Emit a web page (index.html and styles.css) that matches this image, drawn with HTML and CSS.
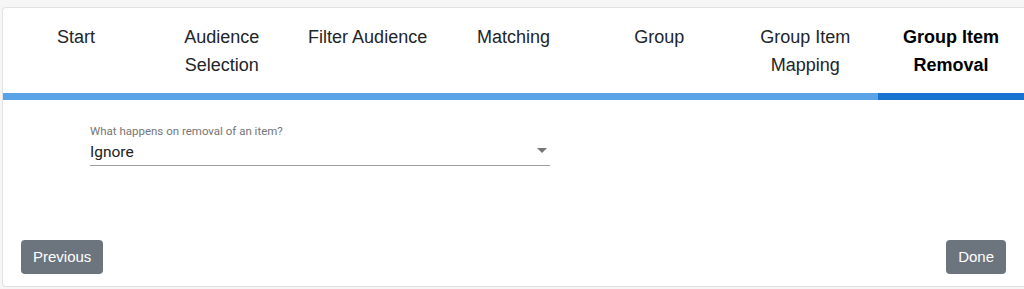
FILE: index.html
```html
<!DOCTYPE html>
<html lang="en">
<head>
  <meta charset="UTF-8">
  <title>Group Wizard</title>
  <link rel="stylesheet" href="styles.css">
</head>
<body>

<div class="wizard">
  <div class="steps">
    <div class="step">Start</div>
    <div class="step">Audience Selection</div>
    <div class="step">Filter Audience</div>
    <div class="step">Matching</div>
    <div class="step">Group</div>
    <div class="step">Group Item Mapping</div>
    <div class="step active">Group Item Removal</div>
  </div>

  <div class="step-body">
    <div class="field">
      <label class="field-label">What happens on removal of an item?</label>
      <div class="select">
        <span class="select-value">Ignore</span>
        <span class="select-arrow"></span>
      </div>
    </div>
  </div>

  <div class="footer">
    <button class="btn">Previous</button>
    <button class="btn">Done</button>
  </div>
</div>

</body>
</html>
```

FILE: styles.css
```css
body {
  margin: 0;
  background: #f6f6f6;
  font-family: 'Liberation Sans', Arial, sans-serif;
  color: #212529;
}

.wizard {
  margin: 7px 0 0 2px;
  background: #fff;
  border: 1px solid #e2e2e2;
  border-right: none;
  border-radius: 4px 0 0 4px;
}

.steps {
  display: grid;
  grid-template-columns: repeat(7, 1fr);
}

.step {
  padding: 15px 4px 14px;
  height: 56px;
  text-align: center;
  font-size: 18px;
  line-height: 28px;
  border-bottom: 7px solid #5aa3e6;
}

.step.active {
  font-weight: bold;
  color: #000;
  border-bottom-color: #1a73d0;
}

.step-body {
  height: 140px;
  padding-left: 87px;
  box-sizing: border-box;
  padding-top: 24px;
}

.field {
  width: 460px;
  font-family: Roboto, 'Noto Sans', sans-serif;
}

.field-label {
  display: block;
  font-size: 11.5px;
  line-height: 14px;
  color: #757575;
}

.select {
  display: flex;
  align-items: center;
  justify-content: space-between;
  height: 27px;
  border-bottom: 1px solid #9e9e9e;
}

.select-value {
  font-size: 15.5px;
  color: #212121;
}

.select-arrow {
  width: 0;
  height: 0;
  margin-right: 3px;
  margin-top: -3px;
  border-left: 5px solid transparent;
  border-right: 5px solid transparent;
  border-top: 5px solid #757575;
}

.footer {
  display: flex;
  justify-content: space-between;
  padding: 0 18px 12px 18px;
}

.btn {
  font-family: 'Liberation Sans', Arial, sans-serif;
  font-size: 15px;
  line-height: 20px;
  padding: 7px 12px;
  background: #6c757d;
  color: #fff;
  border: none;
  border-radius: 4px;
  cursor: pointer;
}
```
